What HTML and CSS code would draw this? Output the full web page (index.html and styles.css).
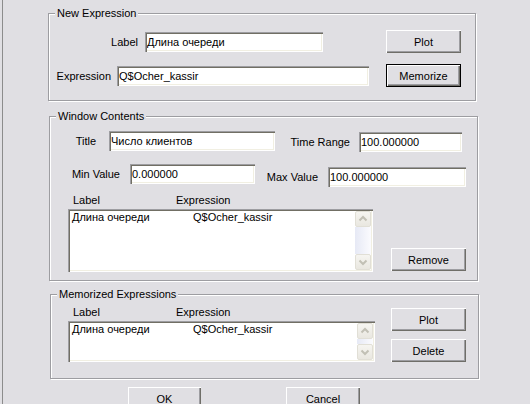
FILE: index.html
```html
<!DOCTYPE html>
<html>
<head>
<meta charset="utf-8">
<link rel="stylesheet" href="styles.css">
</head>
<body>
<div class="frame">
  <fieldset class="group g1">
    <legend>New Expression</legend>
    <div class="row">
      <span class="lbl l-label">Label</span>
      <input class="edit in-label" value="Длина очереди">
      <button class="btn b-plot1">Plot</button>
    </div>
    <div class="row">
      <span class="lbl l-expr">Expression</span>
      <input class="edit in-expr" value="Q$Ocher_kassir">
      <button class="btn default b-memo">Memorize</button>
    </div>
  </fieldset>

  <fieldset class="group g2">
    <legend>Window Contents</legend>
    <div class="row r1">
      <span class="lbl l-title">Title</span>
      <input class="edit in-title" value="Число клиентов">
      <span class="lbl l-time">Time Range</span>
      <input class="edit in-time" value="100.000000">
    </div>
    <div class="row r2">
      <span class="lbl l-min">Min Value</span>
      <input class="edit in-min" value="0.000000">
      <span class="lbl l-max">Max Value</span>
      <input class="edit in-max" value="100.000000">
    </div>
    <div class="head h2"><span class="h-label">Label</span><span>Expression</span></div>
    <div class="listrow">
      <div class="listbox lb2">
        <div class="items">
          <div class="item"><span class="c1">Длина очереди</span><span>Q$Ocher_kassir</span></div>
        </div>
        <div class="vscroll">
          <div class="sbtn"><svg viewBox="0 0 14 14" width="14" height="14"><polyline points="3.5,8.5 7,5 10.5,8.5" /></svg></div>
          <div class="track"></div>
          <div class="sbtn"><svg viewBox="0 0 14 14" width="14" height="14"><polyline points="3.5,5.5 7,9 10.5,5.5" /></svg></div>
        </div>
      </div>
      <button class="btn b-remove">Remove</button>
    </div>
  </fieldset>

  <fieldset class="group g3">
    <legend>Memorized Expressions</legend>
    <div class="cols">
      <div class="leftcol">
        <div class="head h3"><span class="h-label">Label</span><span>Expression</span></div>
        <div class="listbox lb3">
          <div class="items">
            <div class="item"><span class="c1">Длина очереди</span><span>Q$Ocher_kassir</span></div>
          </div>
          <div class="vscroll">
            <div class="sbtn"><svg viewBox="0 0 14 14" width="14" height="14"><polyline points="3.5,8.5 7,5 10.5,8.5" /></svg></div>
            <div class="track"></div>
            <div class="sbtn"><svg viewBox="0 0 14 14" width="14" height="14"><polyline points="3.5,5.5 7,9 10.5,5.5" /></svg></div>
          </div>
        </div>
      </div>
      <div class="rightcol">
        <button class="btn">Plot</button>
        <button class="btn b-delete">Delete</button>
      </div>
    </div>
  </fieldset>

  <div class="bottom">
    <button class="btn b-ok">OK</button>
    <button class="btn b-cancel">Cancel</button>
  </div>
</div>
</body>
</html>
```

FILE: styles.css
```css
* { box-sizing: border-box; }
html, body { margin: 0; padding: 0; }
body {
  width: 530px;
  height: 404px;
  overflow: hidden;
  background: #e0dfe3;
  font-family: "Liberation Sans", Arial, sans-serif;
  font-size: 11px;
  color: #000;
}
.frame {
  margin-left: 2px;
  border-left: 1px solid #8c8c8c;
  height: 404px;
  padding-left: 45px;
  display: flex;
  flex-direction: column;
  align-items: flex-start;
}

/* group boxes */
.group {
  margin: 0;
  border: 1px solid #9d9da1;
  box-shadow: inset 1px 1px 0 #fff, 1px 1px 0 #fff;
  min-width: 0;
}
.group legend {
  margin-left: 6px;
  padding: 0 2px;
  line-height: 13px;
  background: #e0dfe3;
}
.g1 { margin-top: 7px; width: 428px; padding: 10px 0 13px 0; }
.g2 { margin-top: 9px; margin-left: 1px; width: 429px; padding: 8px 0 8px 0; }
.g3 { margin-top: 7px; margin-left: 2px; width: 429px; padding: 0 0 16px 0; }

.row { display: flex; align-items: center; }
.lbl { text-align: right; white-space: nowrap; flex: none; }

/* edits */
.edit {
  flex: none;
  height: 20px;
  margin: 0;
  border: 0;
  padding: 0 0 0 2px;
  background: #fff;
  font: inherit;
  color: #000;
  outline: none;
  box-shadow: inset 1px 1px 0 #9d9da1, inset 2px 2px 0 #716f64,
              inset -1px -1px 0 #fff, inset -2px -2px 0 #f1efe2;
}

/* buttons */
.btn {
  flex: none;
  width: 75px;
  height: 23px;
  margin: 0;
  padding: 0;
  border: 0;
  background: #e0dfe3;
  font: inherit;
  color: #000;
  box-shadow: inset 1px 1px 0 #fff, inset -1px -1px 0 #6f6e68, inset -2px -2px 0 #9d9da1;
}
.btn.default {
  border: 1px solid #000;
}

/* group 1 */
.g1 .row { height: 23px; }
.g1 .row + .row { margin-top: 11px; }
.l-label { width: 89px; margin-right: 7px; }
.in-label { width: 178px; }
.b-plot1 { margin-left: 63px; }
.l-expr { width: 62px; margin-right: 6px; }
.in-expr { width: 252px; }
.b-memo { margin-left: 17px; }

/* group 2 */
.g2 .row { align-items: flex-start; }
.g2 .lbl { line-height: 20px; }
.g2 .r1 { height: 20px; }
.g2 .r2 { height: 23px; margin-top: 13px; }
.l-title { width: 46px; margin-right: 13px; }
.in-title { width: 166px; }
.l-time { width: 75px; margin-right: 9px; margin-top: 1px; }
.in-time { width: 103px; margin-top: 1px; }
.l-min { width: 70px; margin-right: 10px; }
.in-min { width: 125px; }
.l-max { width: 63px; margin-right: 10px; margin-top: 3px; }
.in-max { width: 138px; margin-top: 3px; }

.head { display: flex; height: 13px; line-height: 13px; white-space: nowrap; }
.h-label { width: 103px; }
.h2 { margin-top: 7px; padding-left: 23px; }
.listrow { display: flex; margin-top: 2px; }
.lb2 { margin-left: 18px; width: 305px; height: 63px; }
.b-remove { margin-left: 18px; align-self: flex-end; margin-bottom: 1px; }

/* list boxes */
.listbox {
  display: flex;
  background: #fff;
  padding: 2px;
  box-shadow: inset 1px 1px 0 #9d9da1, inset 2px 2px 0 #716f64,
              inset -1px -1px 0 #fff, inset -2px -2px 0 #f1efe2;
}
.items { flex: 1; }
.item { display: flex; line-height: 13px; padding-left: 2px; white-space: nowrap; }
.c1 { width: 121px; }
.vscroll { width: 16px; flex: none; display: flex; flex-direction: column; }
.sbtn {
  flex: none;
  height: 16px;
  border: 1px solid #e1dfd6;
  border-radius: 2px;
  background: linear-gradient(#f6f5f1, #e9e7e0);
}
.sbtn svg { display: block; }
.sbtn polyline { fill: none; stroke: #c2c0b5; stroke-width: 2; }
.track { flex: 1; background: linear-gradient(to right, #e6e9f5, #fbfbfe); }

/* group 3 */
.cols { display: flex; }
.leftcol { margin-left: 17px; padding-top: 5px; }
.h3 { padding-left: 5px; }
.lb3 { margin-top: 2px; width: 307px; height: 41px; }
.rightcol { margin-left: 16px; padding-top: 7px; display: flex; flex-direction: column; }
.b-delete { margin-top: 8px; }

/* bottom buttons */
.bottom { display: flex; margin-top: 8px; margin-left: 80px; }
.b-ok { width: 73px; }
.b-cancel { width: 74px; margin-left: 85px; }
```
